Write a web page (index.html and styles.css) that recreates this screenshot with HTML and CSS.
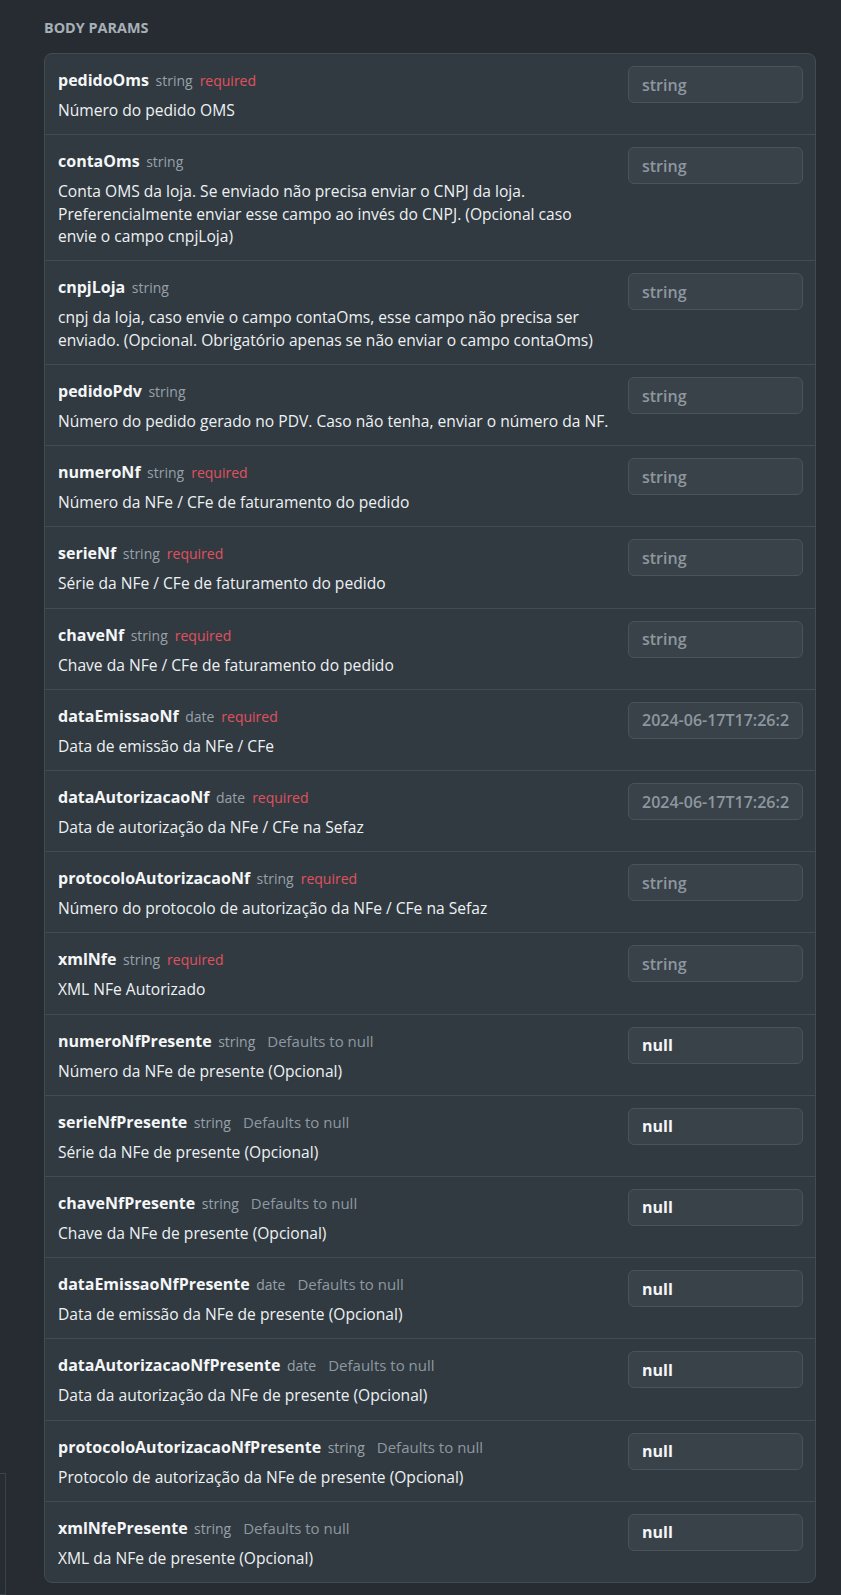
FILE: index.html
```
<html>
<head>
    <title>Body Params</title>
    <link rel="stylesheet" href="styles.css">
</head>
<body>

<div class="side-edge"></div>

<div class="params">
<h3 class="params-title">BODY PARAMS</h3>

<div class="param-list">

<div class="param">
    <div class="param-info">
        <div class="param-head"><span class="param-name">pedidoOms</span><span class="param-type">string</span><span class="param-required">required</span></div>
        <div class="param-desc">Número do pedido OMS</div>
    </div>
    <input class="param-input" type="text" placeholder="string">
</div>

<div class="param">
    <div class="param-info">
        <div class="param-head"><span class="param-name">contaOms</span><span class="param-type">string</span></div>
        <div class="param-desc">Conta OMS da loja. Se enviado não precisa enviar o CNPJ da loja. Preferencialmente enviar esse campo ao invés do CNPJ. (Opcional caso envie o campo cnpjLoja)</div>
    </div>
    <input class="param-input" type="text" placeholder="string">
</div>

<div class="param">
    <div class="param-info">
        <div class="param-head"><span class="param-name">cnpjLoja</span><span class="param-type">string</span></div>
        <div class="param-desc">cnpj da loja, caso envie o campo contaOms, esse campo não precisa ser enviado. (Opcional. Obrigatório apenas se não enviar o campo contaOms)</div>
    </div>
    <input class="param-input" type="text" placeholder="string">
</div>

<div class="param">
    <div class="param-info">
        <div class="param-head"><span class="param-name">pedidoPdv</span><span class="param-type">string</span></div>
        <div class="param-desc">Número do pedido gerado no PDV. Caso não tenha, enviar o número da NF.</div>
    </div>
    <input class="param-input" type="text" placeholder="string">
</div>

<div class="param">
    <div class="param-info">
        <div class="param-head"><span class="param-name">numeroNf</span><span class="param-type">string</span><span class="param-required">required</span></div>
        <div class="param-desc">Número da NFe / CFe de faturamento do pedido</div>
    </div>
    <input class="param-input" type="text" placeholder="string">
</div>

<div class="param">
    <div class="param-info">
        <div class="param-head"><span class="param-name">serieNf</span><span class="param-type">string</span><span class="param-required">required</span></div>
        <div class="param-desc">Série da NFe / CFe de faturamento do pedido</div>
    </div>
    <input class="param-input" type="text" placeholder="string">
</div>

<div class="param">
    <div class="param-info">
        <div class="param-head"><span class="param-name">chaveNf</span><span class="param-type">string</span><span class="param-required">required</span></div>
        <div class="param-desc">Chave da NFe / CFe de faturamento do pedido</div>
    </div>
    <input class="param-input" type="text" placeholder="string">
</div>

<div class="param">
    <div class="param-info">
        <div class="param-head"><span class="param-name">dataEmissaoNf</span><span class="param-type">date</span><span class="param-required">required</span></div>
        <div class="param-desc">Data de emissão da NFe / CFe</div>
    </div>
    <input class="param-input" type="text" placeholder="2024-06-17T17:26:24.000Z">
</div>

<div class="param">
    <div class="param-info">
        <div class="param-head"><span class="param-name">dataAutorizacaoNf</span><span class="param-type">date</span><span class="param-required">required</span></div>
        <div class="param-desc">Data de autorização da NFe / CFe na Sefaz</div>
    </div>
    <input class="param-input" type="text" placeholder="2024-06-17T17:26:24.000Z">
</div>

<div class="param">
    <div class="param-info">
        <div class="param-head"><span class="param-name">protocoloAutorizacaoNf</span><span class="param-type">string</span><span class="param-required">required</span></div>
        <div class="param-desc">Número do protocolo de autorização da NFe / CFe na Sefaz</div>
    </div>
    <input class="param-input" type="text" placeholder="string">
</div>

<div class="param">
    <div class="param-info">
        <div class="param-head"><span class="param-name">xmlNfe</span><span class="param-type">string</span><span class="param-required">required</span></div>
        <div class="param-desc">XML NFe Autorizado</div>
    </div>
    <input class="param-input" type="text" placeholder="string">
</div>

<div class="param">
    <div class="param-info">
        <div class="param-head"><span class="param-name">numeroNfPresente</span><span class="param-type">string</span><span class="param-default">Defaults to null</span></div>
        <div class="param-desc">Número da NFe de presente (Opcional)</div>
    </div>
    <input class="param-input" type="text" value="null">
</div>

<div class="param">
    <div class="param-info">
        <div class="param-head"><span class="param-name">serieNfPresente</span><span class="param-type">string</span><span class="param-default">Defaults to null</span></div>
        <div class="param-desc">Série da NFe de presente (Opcional)</div>
    </div>
    <input class="param-input" type="text" value="null">
</div>

<div class="param">
    <div class="param-info">
        <div class="param-head"><span class="param-name">chaveNfPresente</span><span class="param-type">string</span><span class="param-default">Defaults to null</span></div>
        <div class="param-desc">Chave da NFe de presente (Opcional)</div>
    </div>
    <input class="param-input" type="text" value="null">
</div>

<div class="param">
    <div class="param-info">
        <div class="param-head"><span class="param-name">dataEmissaoNfPresente</span><span class="param-type">date</span><span class="param-default">Defaults to null</span></div>
        <div class="param-desc">Data de emissão da NFe de presente (Opcional)</div>
    </div>
    <input class="param-input" type="text" value="null">
</div>

<div class="param">
    <div class="param-info">
        <div class="param-head"><span class="param-name">dataAutorizacaoNfPresente</span><span class="param-type">date</span><span class="param-default">Defaults to null</span></div>
        <div class="param-desc">Data da autorização da NFe de presente (Opcional)</div>
    </div>
    <input class="param-input" type="text" value="null">
</div>

<div class="param">
    <div class="param-info">
        <div class="param-head"><span class="param-name">protocoloAutorizacaoNfPresente</span><span class="param-type">string</span><span class="param-default">Defaults to null</span></div>
        <div class="param-desc">Protocolo de autorização da NFe de presente (Opcional)</div>
    </div>
    <input class="param-input" type="text" value="null">
</div>

<div class="param">
    <div class="param-info">
        <div class="param-head"><span class="param-name">xmlNfePresente</span><span class="param-type">string</span><span class="param-default">Defaults to null</span></div>
        <div class="param-desc">XML da NFe de presente (Opcional)</div>
    </div>
    <input class="param-input" type="text" value="null">
</div>

</div>
</div>

</body>
</html>
```

FILE: styles.css
```
html, body {
    overflow: hidden;
}
body {
    margin: 0;
    background: #262c32;
    font-family: "Open Sans", "Noto Sans", sans-serif;
    color: #eef1f3;
}
.side-edge {
    position: absolute;
    left: -10px;
    top: 1473px;
    width: 14px;
    height: 120px;
    border: 1px solid #3a434a;
}
.params {
    padding: 17px 25px 0 44px;
}
.params-title {
    margin: 0 0 14px 0;
    font-size: 14.4px;
    font-weight: 700;
    line-height: 22px;
    color: #a8b0b7;
}
.param-list {
    background: #313a41;
    border: 1px solid #434c53;
    border-radius: 8px;
}
.param {
    display: flex;
    align-items: flex-start;
    gap: 14px;
    padding: 12px 12px 12.7px 13px;
    border-bottom: 1px solid #434c53;
}
.param:last-child {
    border-bottom: none;
}
.param-info {
    flex: 1;
    padding-top: 3px;
}
.param-head {
    line-height: 22px;
    height: 22px;
    white-space: nowrap;
}
.param-name {
    font-size: 16px;
    font-weight: 700;
    color: #f4f6f7;
}
.param-type {
    font-size: 14px;
    color: #98a1a9;
    margin-left: 6.5px;
}
.param-required {
    font-size: 14px;
    color: #e0515f;
    margin-left: 7px;
}
.param-default {
    font-size: 15px;
    color: #8e98a0;
    margin-left: 12px;
}
.param-desc {
    margin-top: 8px;
    font-size: 15.6px;
    line-height: 22.5px;
    color: #eef1f3;
}
.param-input {
    flex: none;
    width: 175px;
    height: 37px;
    box-sizing: border-box;
    padding: 0 13px;
    background: #3a4249;
    border: 1px solid #4a535a;
    border-radius: 6px;
    font-family: "Open Sans", "Noto Sans", sans-serif;
    font-size: 16px;
    font-weight: 700;
    color: #f4f6f7;
    outline: none;
}
.param-input::placeholder {
    color: #8d97a0;
    font-weight: 600;
}
```
